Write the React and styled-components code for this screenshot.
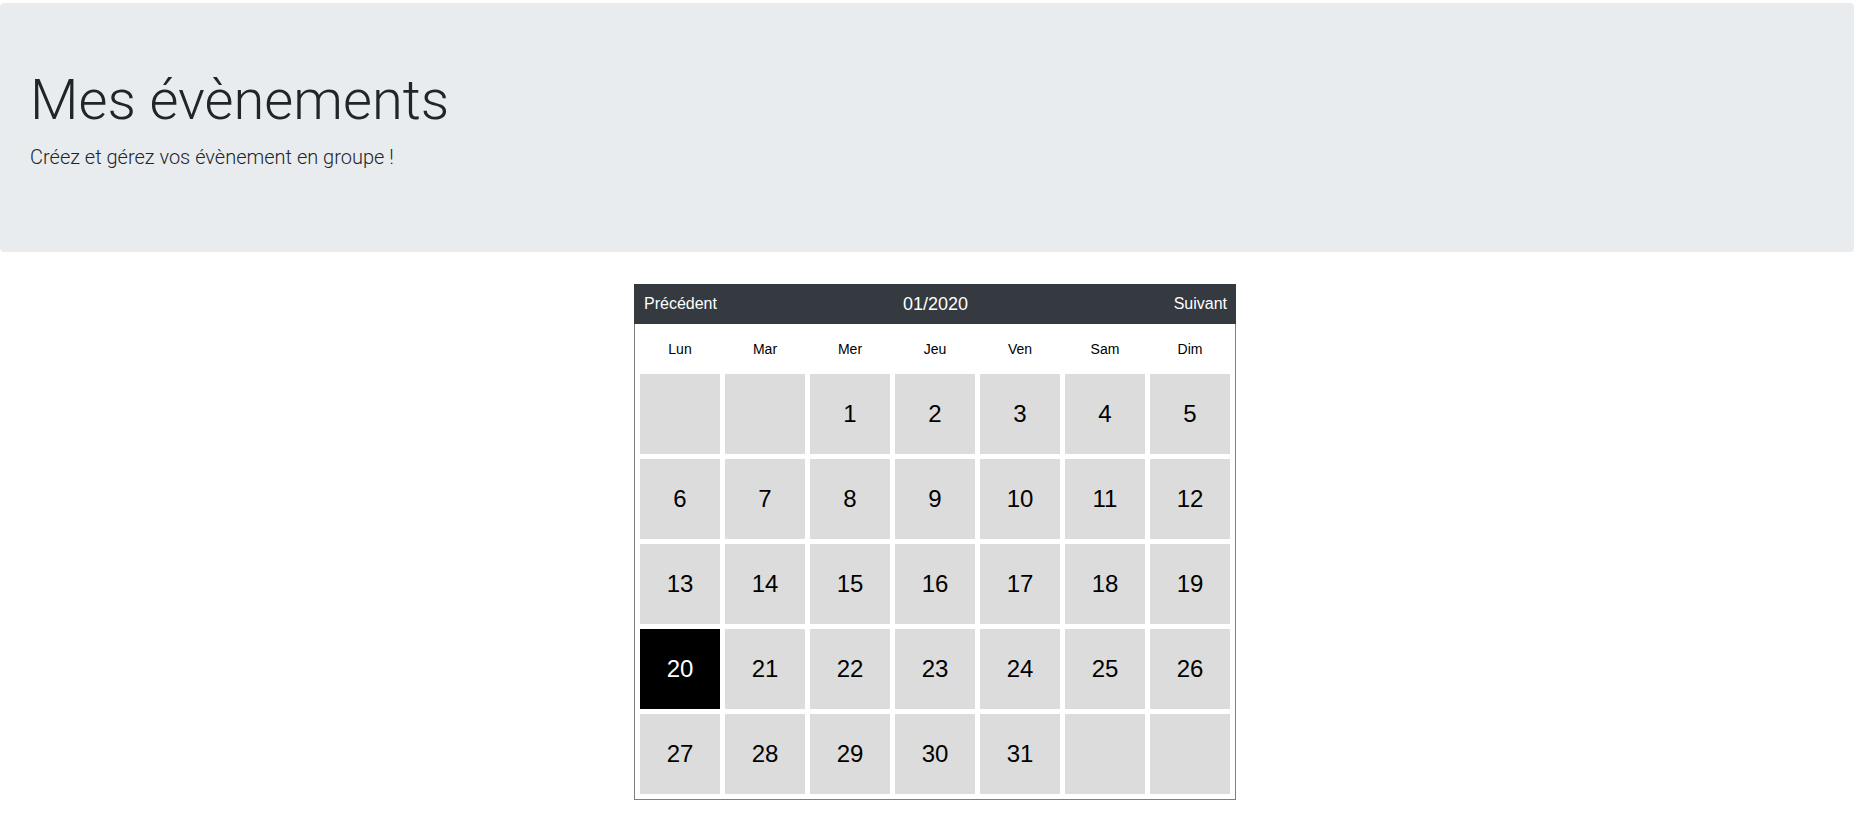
import React from "react";
import styled, { createGlobalStyle } from "styled-components";

const GlobalStyle = createGlobalStyle`
  body {
    margin: 0;
    background: #fff;
    font-family: "Liberation Sans", Arial, sans-serif;
  }
`;

const DAY_NAMES = ["Lun", "Mar", "Mer", "Jeu", "Ven", "Sam", "Dim"];

// janvier 2020 commence un mercredi
function buildDays(offset, count) {
  const days = [];
  for (let i = 0; i < offset; i++) days.push(null);
  for (let d = 1; d <= count; d++) days.push(d);
  while (days.length % 7 !== 0) days.push(null);
  return days;
}

function App() {
  const days = buildDays(2, 31);
  const today = 20;

  return (
    <>
      <GlobalStyle />
      <Jumbotron>
        <Title>Mes évènements</Title>
        <Lead>Créez et gérez vos évènement en groupe !</Lead>
      </Jumbotron>

      <CalendarWrap>
        <Calendar>
          {/* HEADER */}
          <CalHeader>
            <NavLink className="left">Précédent</NavLink>
            <MonthLabel>01/2020</MonthLabel>
            <NavLink className="right">Suivant</NavLink>
          </CalHeader>

          {/* GRID */}
          <CalBody>
            {DAY_NAMES.map((name) => (
              <DayName key={name}>{name}</DayName>
            ))}
            {days.map((d, i) => (
              <DayCell key={i} $active={d === today}>
                {d}
              </DayCell>
            ))}
          </CalBody>
        </Calendar>
      </CalendarWrap>
    </>
  );
}

const Jumbotron = styled.div`
  margin-top: 3px;
  margin-bottom: 32px;
  padding: 64px 30px;
  background: #e9ecef;
  border-radius: 4px;
  color: #212529;
`;

const Title = styled.h1`
  margin: 0 0 8px;
  font-family: Roboto, "Liberation Sans", sans-serif;
  font-weight: 300;
  font-size: 56px;
  line-height: 1.2;
`;

const Lead = styled.p`
  margin: 0 0 16px;
  font-family: Roboto, "Liberation Sans", sans-serif;
  font-weight: 300;
  font-size: 20px;
  line-height: 1.5;
`;

const CalendarWrap = styled.div`
  display: flex;
  justify-content: center;
  padding-left: 16px;
`;

const Calendar = styled.div`
  width: 602px;
`;

const CalHeader = styled.div`
  display: grid;
  grid-template-columns: 1fr auto 1fr;
  align-items: center;
  height: 40px;
  padding: 0 9px 0 10px;
  background: #343a40;
  color: #fff;
  font-size: 16px;
  .left {
    justify-self: start;
  }
  .right {
    justify-self: end;
  }
`;

const NavLink = styled.span`
  cursor: pointer;
`;

const MonthLabel = styled.span`
  font-size: 18px;
`;

const CalBody = styled.div`
  display: grid;
  grid-template-columns: repeat(7, 80px);
  grid-template-rows: 40px;
  grid-auto-rows: 80px;
  gap: 5px;
  padding: 5px;
  border: 1px solid #808080;
  border-top: none;
`;

const DayName = styled.div`
  display: flex;
  justify-content: center;
  align-items: center;
  font-size: 14px;
  color: #000;
`;

const DayCell = styled.div`
  display: flex;
  justify-content: center;
  align-items: center;
  font-size: 24px;
  background: ${(p) => (p.$active ? "#000" : "#dcdcdc")};
  color: ${(p) => (p.$active ? "#fff" : "#000")};
`;

export default App;
